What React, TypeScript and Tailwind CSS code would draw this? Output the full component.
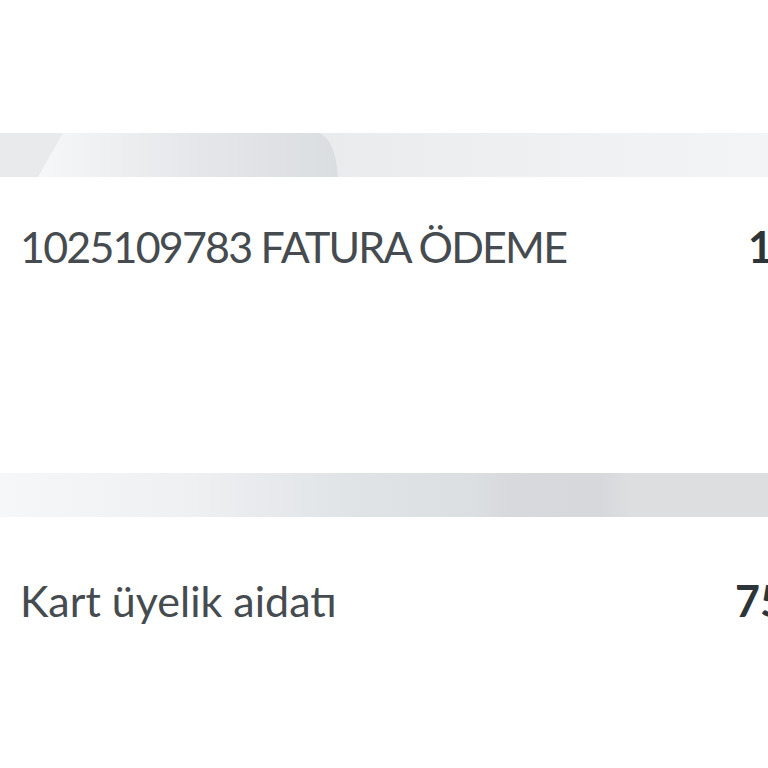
import React from "react";

function BandTop() {
  return (
    <div className="h-[44px] w-full overflow-hidden bg-[#eceef0]">
      <svg width="768" height="44" viewBox="0 0 768 44" className="block">
        <defs>
          <linearGradient id="g1" x1="0" x2="1" y1="0" y2="0">
            <stop offset="0" stopColor="#f6f7f8" />
            <stop offset="0.55" stopColor="#e4e6e9" />
            <stop offset="1" stopColor="#dbdee1" />
          </linearGradient>
          <linearGradient id="g2" x1="0" x2="1" y1="0" y2="0">
            <stop offset="0" stopColor="#e9ebed" />
            <stop offset="0.5" stopColor="#eef0f2" />
            <stop offset="1" stopColor="#f3f4f5" />
          </linearGradient>
        </defs>
        <rect x="0" y="0" width="768" height="44" fill="#e9eaec" />
        <path d="M63 0 L320 0 Q336 8 338 44 L38 44 Z" fill="url(#g1)" />
        <path d="M320 0 L768 0 L768 44 L338 44 Q336 8 320 0 Z" fill="url(#g2)" />
      </svg>
    </div>
  );
}

function BandBottom() {
  return (
    <div className="h-[44px] w-full bg-[linear-gradient(90deg,#f6f7f8_0%,#eef0f2_25%,#e1e4e6_45%,#dcdfe1_62%,#d7d9dc_66%,#d6d8db_78%,#dcdee0_82%,#dcdee0_100%)]" />
  );
}

export default function App() {
  return (
    <div className="w-[768px] h-[768px] overflow-hidden bg-white" style={{ fontFamily: "Lato, 'Open Sans', sans-serif" }}>
      <div className="h-[133px]" />
      <BandTop />
      <div className="h-[296px] w-full overflow-hidden">
        <div className="flex items-start pt-[46px] whitespace-nowrap">
          <div className="w-[748px] shrink-0 pl-5 text-[43px] leading-[48px] tracking-[-1.8px] text-[#454b4f]">
            1025109783 FATURA ÖDEME
          </div>
          <div className="shrink-0 text-[43px] leading-[48px] font-bold tracking-[-1px] text-[#2e3538]">100,00 TL</div>
        </div>
      </div>
      <BandBottom />
      <div className="w-full overflow-hidden">
        <div className="flex items-start pt-[60px] whitespace-nowrap">
          <div className="w-[735px] shrink-0 pl-5 text-[43px] leading-[48px] text-[#454b4f]">
            Kart üyelik aidatı
          </div>
          <div className="shrink-0 text-[43px] leading-[48px] font-bold text-[#2e3538]">75,00 TL</div>
        </div>
      </div>
    </div>
  );
}
